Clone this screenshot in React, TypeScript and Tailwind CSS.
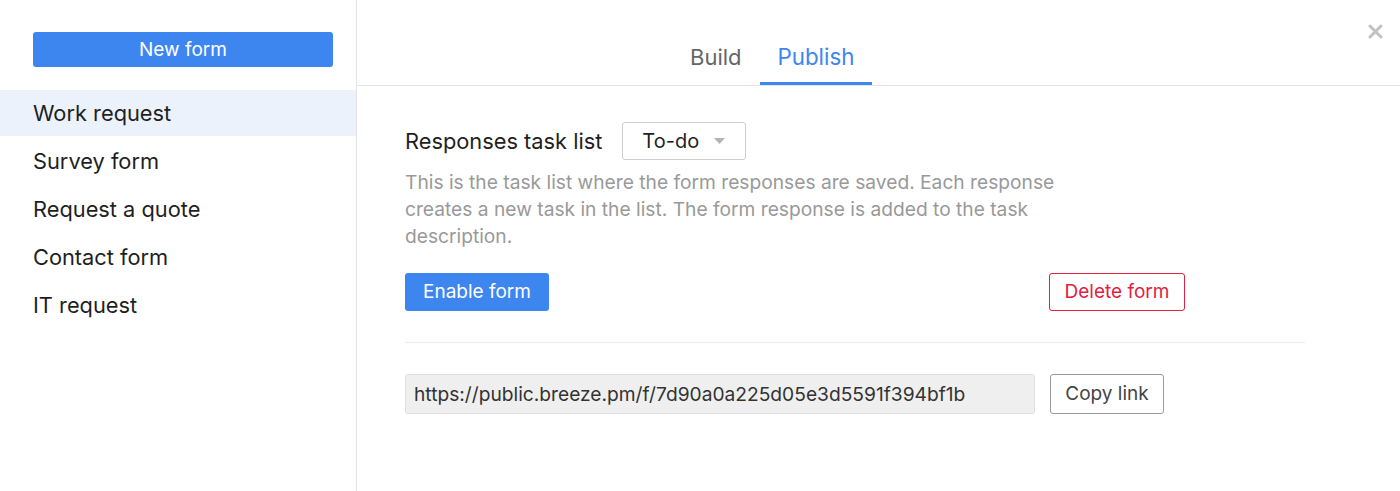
import React from "react";

const font = { fontFamily: "Inter, 'Liberation Sans', Arial, sans-serif" };

export default function App() {
  const items = ["Work request", "Survey form", "Request a quote", "Contact form", "IT request"];
  return (
    <div className="flex h-[491px] w-[1400px] bg-white text-[#1f1f1f] relative overflow-hidden" style={font}>
      <aside className="w-[357px] shrink-0 border-r border-[#e3e3e3] pt-[32px]">
        <div className="px-[33px] pr-[23px]">
          <button className="w-[300px] h-[35px] rounded-[3px] bg-[#3d86f0] text-white text-[19px] leading-none">
            New form
          </button>
        </div>
        <ul className="mt-[23px] flex flex-col gap-[2px]">
          {items.map((t, i) => (
            <li
              key={t}
              className={`h-[46px] flex items-center px-[33px] text-[21.8px] ${i === 0 ? "bg-[#ebf2fc]" : ""}`}
            >
              {t}
            </li>
          ))}
        </ul>
      </aside>
      <main className="flex-1 flex flex-col">
        <div className="h-[86px] border-b border-[#e3e3e3] flex items-end pl-[315px]">
          <div className="h-[85px] px-[18px] pt-[44px] leading-[26px] text-[22px] text-[#666]">Build</div>
          <div className="h-[85px] px-[18px] pt-[44px] leading-[26px] text-[22.3px] text-[#3d86f0] border-b-[3px] border-[#3d86f0]">
            Publish
          </div>
        </div>
        <div className="pl-[48px] pt-[36px]">
          <div className="flex items-center gap-[20px]">
            <span className="text-[21.8px]">Responses task list</span>
            <div className="w-[124px] h-[38px] border border-[#cfcfcf] rounded-[3px] flex items-center pl-[19px] pr-[20px] justify-between text-[20px]">
              <span>To-do</span>
              <svg width="11" height="6" viewBox="0 0 11 6">
                <path d="M0 0 L11 0 L5.5 6 Z" fill="#b5b5b5" />
              </svg>
            </div>
          </div>
          <p className="mt-[9px] text-[19.2px] leading-[27px] text-[#999]">
            This is the task list where the form responses are saved. Each response
            <br />
            creates a new task in the list. The form response is added to the task
            <br />
            description.
          </p>
          <div className="w-[780px] mt-[23px] flex justify-between">
            <button className="w-[144px] h-[38px] rounded-[3px] bg-[#3d86f0] text-white text-[19px] pt-[1px]">Enable form</button>
            <button className="w-[136px] h-[38px] rounded-[3px] border border-[#e1213f] text-[#e1213f] text-[19px] pt-[1px]">
              Delete form
            </button>
          </div>
          <div className="w-[900px] mt-[31px] border-t border-[#ececec]" />
          <div className="mt-[31px] flex items-center gap-[15px]">
            <div className="w-[630px] h-[40px] rounded-[3px] border border-[#dedede] bg-[#efefef] flex items-center pl-[8px] text-[19.2px] text-[#333]">
              https://public.breeze.pm/f/7d90a0a225d05e3d5591f394bf1b
            </div>
            <button className="w-[114px] h-[40px] rounded-[3px] border border-[#9a9a9a] text-[19px] text-[#444] pt-[1px]">Copy link</button>
          </div>
        </div>
      </main>
      <button className="absolute top-[24px] left-[1368px] w-[15px] h-[15px]" aria-label="Close">
        <svg width="15" height="15" viewBox="0 0 15 15">
          <path d="M2 2 L13 13 M13 2 L2 13" stroke="#c2c2c2" strokeWidth="3" strokeLinecap="round" />
        </svg>
      </button>
    </div>
  );
}
